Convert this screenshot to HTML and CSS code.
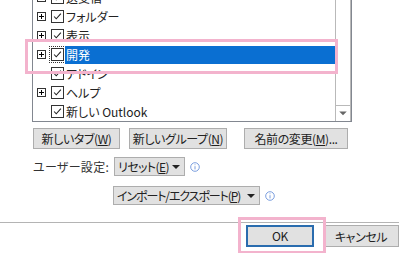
FILE: index.html
```html
<!DOCTYPE html>
<html lang="ja">
<head>
    <meta charset="UTF-8">
    <title>リボンのユーザー設定</title>
    <link rel="stylesheet" href="styles.css">
</head>
<body>
    <div class="list">
        <div class="tree">
            <div class="row"><span class="expander"></span><span class="check"><svg viewBox="0 0 13 13"><polyline points="2.5,6.5 5,9.2 10.5,3.2"/></svg></span><span class="label">送受信</span></div>
            <div class="row"><span class="expander"></span><span class="check"><svg viewBox="0 0 13 13"><polyline points="2.5,6.5 5,9.2 10.5,3.2"/></svg></span><span class="label">フォルダー</span></div>
            <div class="row"><span class="expander"></span><span class="check"><svg viewBox="0 0 13 13"><polyline points="2.5,6.5 5,9.2 10.5,3.2"/></svg></span><span class="label">表示</span></div>
            <div class="row selected"><span class="expander"></span><span class="check"><svg viewBox="0 0 13 13"><polyline points="2.5,6.5 5,9.2 10.5,3.2"/></svg></span><span class="label">開発</span></div>
            <div class="row"><span class="expander none"></span><span class="check"><svg viewBox="0 0 13 13"><polyline points="2.5,6.5 5,9.2 10.5,3.2"/></svg></span><span class="label">アドイン</span></div>
            <div class="row"><span class="expander"></span><span class="check"><svg viewBox="0 0 13 13"><polyline points="2.5,6.5 5,9.2 10.5,3.2"/></svg></span><span class="label">ヘルプ</span></div>
            <div class="row"><span class="expander none"></span><span class="check"><svg viewBox="0 0 13 13"><polyline points="2.5,6.5 5,9.2 10.5,3.2"/></svg></span><span class="label">新しい Outlook</span></div>
        </div>
        <div class="scroll">
            <div class="scroll-down"><svg viewBox="0 0 13 13"><polygon points="3,5 10,5 6.5,8.5"/></svg></div>
        </div>
    </div>

    <div class="actions">
        <button class="btn btn-tab">新しいタブ(<u>W</u>)</button>
        <button class="btn btn-group">新しいグループ(<u>N</u>)</button>
        <button class="btn btn-rename">名前の変更(<u>M</u>)...</button>
    </div>

    <div class="setting">
        <span class="setting-label">ユーザー設定:</span>
        <span class="dropdown dropdown-reset"><span class="dropdown-text">リセット(<u>E</u>)</span><i class="arrow"></i></span>
        <svg class="info" viewBox="0 0 10 10"><circle cx="5" cy="5" r="4.3"/><line x1="5" y1="4.2" x2="5" y2="7.4"/><line x1="5" y1="2.4" x2="5" y2="3.2"/></svg>
    </div>

    <div class="setting setting-import">
        <span class="dropdown dropdown-import"><span class="dropdown-text">インポート/エクスポート(<u>P</u>)</span><i class="arrow"></i></span>
        <svg class="info" viewBox="0 0 10 10"><circle cx="5" cy="5" r="4.3"/><line x1="5" y1="4.2" x2="5" y2="7.4"/><line x1="5" y1="2.4" x2="5" y2="3.2"/></svg>
    </div>

    <div class="footer">
        <button class="btn btn-ok">OK</button>
        <button class="btn btn-cancel">キャンセル</button>
    </div>

    <!-- highlight marks drawn over the dialog -->
    <div class="mark mark-row"></div>
    <div class="mark mark-ok"></div>
</body>
</html>
```

FILE: styles.css
```css
body {
    margin: 0;
    width: 399px;
    height: 253px;
    overflow: hidden;
    position: relative;
    background: #fff;
    color: #000;
    font-family: 'Noto Sans CJK JP', 'Noto Sans', sans-serif;
    font-size: 12px;
    font-feature-settings: "palt";
}
u {
    text-decoration: underline;
    text-underline-offset: 1px;
}
.list {
    box-sizing: border-box;
    display: flex;
    width: 320px;
    height: 142px;
    margin: -20px 0 0 32px;
    border: 1px solid #828790;
}
.tree {
    flex: 1;
    padding-top: 7px;
}
.row {
    display: flex;
    align-items: center;
    height: 19px;
}
.expander {
    box-sizing: border-box;
    position: relative;
    width: 9px;
    height: 9px;
    margin-left: 4px;
    border: 1px solid #333;
}
.expander::before,
.expander::after {
    content: '';
    position: absolute;
    background: #000;
}
.expander::before {
    left: 1px;
    top: 3px;
    width: 5px;
    height: 1px;
}
.expander::after {
    left: 3px;
    top: 1px;
    width: 1px;
    height: 5px;
}
.expander.none {
    visibility: hidden;
}
.check {
    box-sizing: border-box;
    width: 13px;
    height: 13px;
    margin-left: 5px;
    border: 1px solid #333;
    background: #fff;
}
.check svg {
    display: block;
    width: 11px;
    height: 11px;
    fill: none;
    stroke: #222;
    stroke-width: 1.3;
}
.label {
    flex: 1;
    height: 18px;
    line-height: 17px;
    margin-left: 1px;
    padding-left: 1px;
    white-space: nowrap;
    color: #222;
}
.selected .check {
    outline: 1px dotted #333;
    outline-offset: 1px;
}
.selected .label {
    background: #0a6fd2;
    color: #fff;
}
.scroll {
    box-sizing: border-box;
    width: 16px;
    display: flex;
    flex-direction: column;
    justify-content: flex-end;
    border-left: 1px solid #b9b9b9;
    border-right: 1px solid #b9b9b9;
    background: #fff;
}
.scroll-down {
    height: 15px;
    border-top: 1px solid #b9b9b9;
}
.scroll-down svg {
    display: block;
    width: 14px;
    height: 14px;
    fill: #666;
}
.actions {
    display: flex;
    margin: 6px 0 0 33px;
}
.btn {
    box-sizing: border-box;
    height: 21px;
    padding: 0;
    border: 1px solid #adadad;
    background: #e1e1e1;
    color: #222;
    font-family: inherit;
    font-size: 12px;
    font-feature-settings: "palt";
    letter-spacing: -0.4px;
    line-height: 19px;
    text-align: center;
    white-space: nowrap;
}
.btn-tab {
    width: 87px;
}
.btn-group {
    width: 98px;
    margin-left: 9px;
}
.btn-rename {
    width: 104px;
    margin-left: 17px;
}
.setting {
    display: flex;
    align-items: center;
    margin: 8px 0 0 33px;
    height: 19px;
}
.setting-label {
    width: 81px;
    color: #333;
    letter-spacing: 0.3px;
}
.dropdown {
    box-sizing: border-box;
    display: flex;
    align-items: center;
    height: 19px;
    padding: 0 0 0 3px;
    border: 1px solid #adadad;
    background: #e1e1e1;
    color: #222;
    white-space: nowrap;
    letter-spacing: -0.6px;
}
.dropdown-text {
    flex: 1;
    overflow: hidden;
}
.dropdown-reset {
    width: 71px;
}
.setting-import {
    margin: 10px 0 0 113px;
}
.dropdown-import {
    width: 147px;
    letter-spacing: -1.1px;
}
.arrow {
    flex: none;
    margin: 0 4px 0 3px;
    width: 0;
    height: 0;
    border-left: 4px solid transparent;
    border-right: 4px solid transparent;
    border-top: 4px solid #222;
}
.info {
    width: 10px;
    height: 10px;
    margin-left: 5px;
    fill: none;
    stroke: #5b86d6;
    stroke-width: 0.8;
}
.footer {
    display: flex;
    gap: 9px;
    margin-top: 17px;
    padding: 2px 0 0 246px;
    border-top: 1px solid #b4b4b4;
}
.btn-ok {
    width: 75px;
    height: 22px;
    border: 2px solid #2a6cae;
    line-height: 18px;
}
.btn-cancel {
    flex: none;
    width: 76px;
    height: 22px;
}
.mark {
    position: absolute;
    box-sizing: border-box;
    border: 3px solid #f3b3cd;
}
.mark-row {
    left: 25px;
    top: 39px;
    width: 313px;
    height: 35px;
}
.mark-ok {
    left: 238px;
    top: 217px;
    width: 88px;
    height: 37px;
}
```
